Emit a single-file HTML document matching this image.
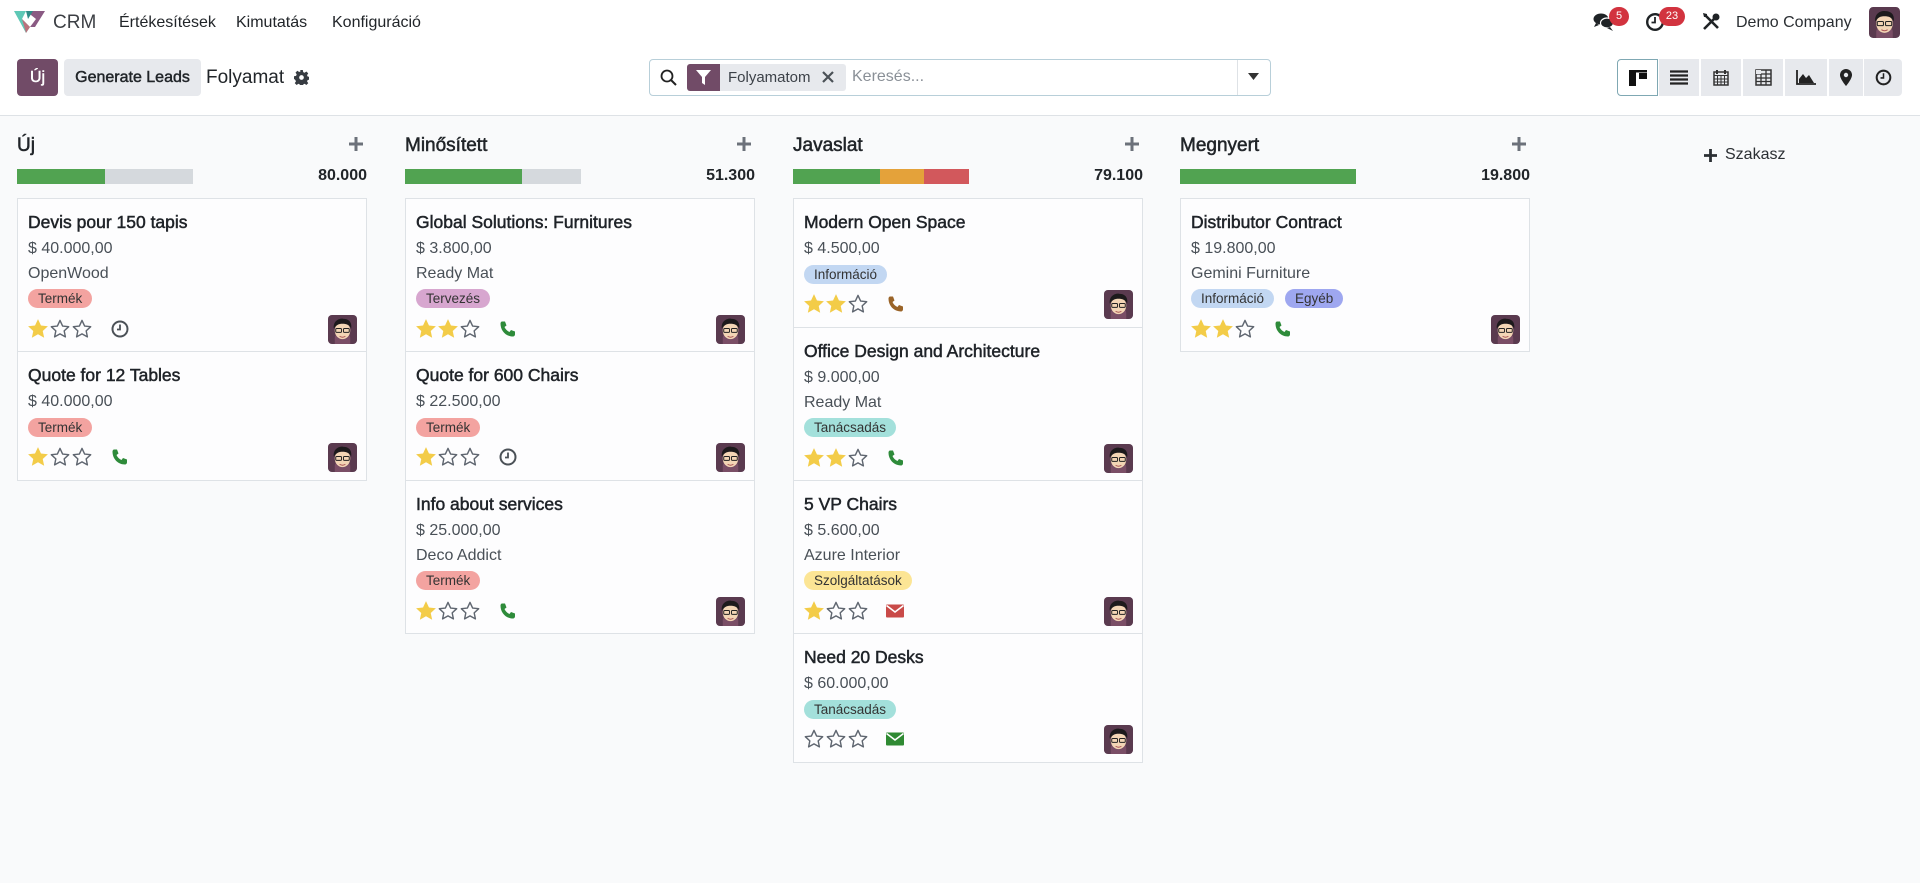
<!DOCTYPE html>
<html><head><meta charset="utf-8">
<style>
*{box-sizing:border-box;margin:0;padding:0}
body{width:1920px;height:883px;overflow:hidden;background:#f9fafb;font-family:"Liberation Sans",sans-serif;color:#212529;position:relative}
.a{position:absolute}
.nav{left:0;top:0;width:1920px;height:46px;background:#fff}
.nav span{position:absolute;top:14px;font-size:16px;color:#212529}
.cp{left:0;top:46px;width:1920px;height:70px;background:#fff;border-bottom:1px solid #dee2e6}
.md{font-weight:normal;-webkit-text-stroke:0.45px currentColor}
.btn{position:absolute;top:59px;height:37px;border-radius:4px;font-size:16px;display:flex;align-items:center;justify-content:center;font-weight:normal;-webkit-text-stroke:0.45px currentColor}
.vs{position:absolute;top:59px;height:37px;background:#e7e9ed;display:flex;align-items:center;justify-content:center}
.col{position:absolute;top:130px;width:350px}
.ct{position:absolute;left:0;top:5px;font-size:19px;color:#212529;-webkit-text-stroke:0.5px #212529}
.cplus{position:absolute;right:4px;top:7px;width:14px;height:14px}
.bar{position:absolute;left:0;top:39px;width:176px;height:15px;background:#d5d9dd;display:flex}
.tot{position:absolute;right:0;top:37px;font-size:16px;font-weight:bold}
.card{position:absolute;left:0;width:350px;background:#fdfdfe;border:1px solid #dee2e6}
.card .t{position:absolute;left:10px;top:13px;font-size:17.5px;color:#1f2328;white-space:nowrap;-webkit-text-stroke:0.5px #1f2328}
.card .p{position:absolute;left:10px;font-size:16px;color:#495057}
.tag{position:absolute;height:19px;border-radius:10px;font-size:13.5px;line-height:19px;padding:0 10px;color:#333}
.stars{position:absolute;left:9px;width:70px;height:22px}
.act{position:absolute;left:92px;width:20px;height:20px}
.av{position:absolute;right:9px;width:29px;height:29px}
</style></head><body>
<svg width="0" height="0" style="position:absolute">
<defs>
<symbol id="sf" viewBox="0 0 20 20"><path d="M10 1l2.7 5.8 6.3.7-4.7 4.3 1.3 6.2-5.6-3.2-5.6 3.2 1.3-6.2L1 7.5l6.3-.7z" fill="#f3cc48"/></symbol>
<symbol id="se" viewBox="0 0 20 20"><path d="M10 2.2l2.4 5.1 5.5.6-4.1 3.8 1.1 5.5-4.9-2.8-4.9 2.8 1.1-5.5-4.1-3.8 5.5-.6z" fill="none" stroke="#5f6670" stroke-width="1.3" stroke-linejoin="round"/></symbol>
<symbol id="av" viewBox="0 0 30 30"><rect width="30" height="30" rx="4" fill="#5a3a4f"/><path d="M7 30v-6c0-8 16-8 16 0v6z" fill="#7a4e66"/><ellipse cx="15" cy="16" rx="8" ry="9" fill="#f3d5b5"/><path d="M6 14c-1-8 6-11 10-10 5 0 9 3 8 10-2-4-5-5-9-5s-6 1-9 5z" fill="#1d1a1c"/><rect x="8" y="14" width="6" height="4" rx="1" fill="none" stroke="#222" stroke-width="1"/><rect x="16" y="14" width="6" height="4" rx="1" fill="none" stroke="#222" stroke-width="1"/><path d="M12 22q3 2 6 0" stroke="#a55" fill="none" stroke-width="1"/></symbol>
<symbol id="ph" viewBox="0 0 20 20"><path d="M4 2.5l3 0 1.5 4-2 1.5c1 2.3 2.7 4 5 5l1.5-2 4 1.5v3c0 1-1 2-2 2C8 17.5 2.5 12 2.5 4.5c0-1 .8-2 1.5-2z"/></symbol>
<symbol id="ck" viewBox="0 0 20 20"><circle cx="10" cy="10" r="7.5" fill="none" stroke="#4b5157" stroke-width="2"/><path d="M10 5.5v5h-3" fill="none" stroke="#4b5157" stroke-width="1.8"/></symbol>
<symbol id="em" viewBox="0 0 20 20"><rect x="1" y="3.5" width="18" height="13" rx="1"/><path d="M1.5 4.5l8.5 6.5 8.5-6.5" fill="none" stroke="#fff" stroke-width="1.6"/></symbol>
<symbol id="pl" viewBox="0 0 14 14"><path d="M5.5 0h3v5.5H14v3H8.5V14h-3V8.5H0v-3h5.5z" fill="#6c717a"/></symbol>
</defs></svg>

<div class="a nav">
<svg class="a" style="left:14px;top:11px" width="31" height="22" viewBox="0 0 31 22"><path d="M0 0h12l-4 8 8 8-4 6z" fill="#5ec8b6"/><path d="M12 0h19l-10 16-5 0 6-8z" fill="#8a5a83"/><path d="M8 8l8 8-4 6z" fill="#d15d6f" opacity=".8"/><path d="M12 0h7l-5 8z" fill="#2e8c87"/></svg>
<span style="left:53px;top:12px;font-size:19px;color:#3c3f44">CRM</span>
<span style="left:119px">Értékesítések</span>
<span style="left:236px">Kimutatás</span>
<span style="left:332px">Konfiguráció</span>
<svg class="a" style="left:1593px;top:12px" width="22" height="20" viewBox="0 0 22 20"><ellipse cx="8" cy="7" rx="7.5" ry="5.5" fill="#1f2326"/><path d="M3 11l-2 4 5-2z" fill="#1f2326"/><ellipse cx="14" cy="11" rx="6.5" ry="5" fill="#1f2326" stroke="#fff" stroke-width="1.2"/><path d="M17 15l3 4-6-3z" fill="#1f2326"/></svg>
<div class="a" style="left:1609px;top:7px;width:20px;height:19px;border-radius:10px;background:#d2333f;color:#fff;font-size:11px;text-align:center;line-height:19px">5</div>
<svg class="a" style="left:1645px;top:12px" width="20" height="20" viewBox="0 0 20 20"><circle cx="10" cy="10" r="7.8" fill="none" stroke="#1f2326" stroke-width="2.4"/><path d="M10 5v5.5H6.5" fill="none" stroke="#1f2326" stroke-width="1.8"/></svg>
<div class="a" style="left:1659px;top:7px;width:26px;height:19px;border-radius:10px;background:#d2333f;color:#fff;font-size:11px;text-align:center;line-height:19px">23</div>
<svg class="a" style="left:1702px;top:12px" width="19" height="19" viewBox="0 0 19 19"><path d="M2 17L12 7M3 3l13 13" stroke="#1f2326" stroke-width="2.6"/><circle cx="14" cy="5" r="3.5" fill="#1f2326"/><path d="M1 1l4 1 0 3-3 0z" fill="#1f2326"/></svg>
<span style="left:1736px;color:#2b2f33">Demo Company</span>
<svg class="a" style="left:1869px;top:7px" width="31" height="31"><use href="#av"/></svg>
</div>

<div class="a cp"></div>
<div class="btn" style="left:17px;width:41px;background:#714b67;color:#fff">Új</div>
<div class="btn" style="left:64px;width:137px;background:#e7e9ed;color:#212529">Generate Leads</div>
<div class="a" style="left:206px;top:67px;font-size:19px;color:#212529">Folyamat</div>
<svg class="a" style="left:294px;top:70px" width="15" height="15" viewBox="0 0 16 16"><path d="M6.6 0h2.8l.4 2.2 1.5.7 1.9-1.3 2 2-1.3 1.9.7 1.5 2.2.4v2.8l-2.2.4-.7 1.5 1.3 1.9-2 2-1.9-1.3-1.5.7-.4 2.2H6.6l-.4-2.2-1.5-.7-1.9 1.3-2-2 1.3-1.9-.7-1.5L0 9.4V6.6l2.2-.4.7-1.5-1.3-1.9 2-2 1.9 1.3 1.5-.7z" fill="#373c42"/><circle cx="8" cy="8" r="2.5" fill="#fff"/></svg>

<div class="a" style="left:649px;top:59px;width:622px;height:37px;border:1px solid #b8cfd9;border-radius:4px;background:#fff"></div>
<svg class="a" style="left:660px;top:69px" width="17" height="17" viewBox="0 0 17 17"><circle cx="7" cy="7" r="5.5" fill="none" stroke="#222" stroke-width="1.8"/><path d="M11 11l5 5" stroke="#222" stroke-width="2"/></svg>
<div class="a" style="left:687px;top:64px;width:33px;height:27px;background:#714b67;border-radius:3px 0 0 3px"></div>
<svg class="a" style="left:696px;top:70px" width="15" height="15" viewBox="0 0 15 15"><path d="M0 0h15L9 7v8l-3-2V7z" fill="#fff"/></svg>
<div class="a" style="left:720px;top:64px;width:126px;height:27px;background:#e7e9ed;border-radius:0 3px 3px 0;font-size:15px;line-height:27px;padding-left:8px;color:#3c4148">Folyamatom</div>
<svg class="a" style="left:822px;top:71px" width="12" height="12" viewBox="0 0 12 12"><path d="M1 1l10 10M11 1L1 11" stroke="#4b5157" stroke-width="2.2"/></svg>
<div class="a" style="left:852px;top:68px;font-size:16px;color:#8a9097">Keresés...</div>
<div class="a" style="left:1237px;top:60px;width:1px;height:35px;background:#dee2e6"></div>
<svg class="a" style="left:1248px;top:73px" width="11" height="7"><path d="M0 0h11L5.5 7z" fill="#333"/></svg>

<div class="vs" style="left:1617px;width:41px;background:#fff;border:1px solid #7fa8b3;border-radius:4px 0 0 4px"><svg width="18" height="16"><rect x="0" y="0" width="7" height="16" fill="#111"/><rect x="7" y="0" width="11" height="2.5" fill="#111"/><rect x="10" y="3" width="8" height="6" fill="#111"/></svg></div>
<div class="vs" style="left:1659px;width:40px"><svg width="18" height="15"><path d="M0 1.5h18M0 5.5h18M0 9.5h18M0 13.5h18" stroke="#222" stroke-width="2.3"/></svg></div>
<div class="vs" style="left:1701px;width:40px"><svg width="16" height="17" viewBox="0 0 16 17"><rect x="1" y="3" width="14" height="13" fill="none" stroke="#333" stroke-width="1.5"/><path d="M1 6.5h14M4.5 6.5v9.5M8 6.5v9.5M11.5 6.5v9.5M1 10h14M1 13h14" stroke="#333" stroke-width="1"/><path d="M4 1v4M12 1v4" stroke="#333" stroke-width="2"/></svg></div>
<div class="vs" style="left:1743px;width:40px"><svg width="17" height="17" viewBox="0 0 17 17"><rect x="1" y="1" width="15" height="15" fill="none" stroke="#333" stroke-width="1.5"/><path d="M1 5h15M1 9h15M1 12.5h15M6 5v11M11 1v15" stroke="#333" stroke-width="1.3"/><rect x="1" y="1" width="5" height="4" fill="#e7e9ed"/></svg></div>
<div class="vs" style="left:1785px;width:42px"><svg width="20" height="15" viewBox="0 0 20 15"><path d="M1 0v14h19" stroke="#222" stroke-width="1.8" fill="none"/><path d="M3 13V9l4-5 3 4 3-3 5 8z" fill="#222"/></svg></div>
<div class="vs" style="left:1829px;width:34px"><svg width="12" height="17" viewBox="0 0 12 17"><path d="M6 0a6 6 0 0 1 6 6c0 4-6 11-6 11S0 10 0 6a6 6 0 0 1 6-6z" fill="#222"/><circle cx="6" cy="6" r="2.2" fill="#e7e9ed"/></svg></div>
<div class="vs" style="left:1864px;width:38px;border-radius:0 4px 4px 0"><svg width="17" height="17" viewBox="0 0 20 20"><circle cx="10" cy="10" r="8" fill="none" stroke="#222" stroke-width="2.4"/><path d="M10 5v5.5H6.5" fill="none" stroke="#222" stroke-width="1.8"/></svg></div>

<!-- Column 1 -->
<div class="col" style="left:17px">
<div class="ct">Új</div><svg class="cplus" viewBox="0 0 14 14"><use href="#pl"/></svg>
<div class="bar"><div style="width:88px;background:#51a351"></div></div>
<div class="tot">80.000</div>
</div>
<div class="card" style="left:17px;top:198px;height:154px">
<div class="t">Devis pour 150 tapis</div><div class="p" style="top:41px">$ 40.000,00</div><div class="p" style="top:66px">OpenWood</div>
<div class="tag" style="left:10px;top:90px;background:#f3a3a0">Termék</div>
<svg class="stars" style="top:119px"><use href="#sf" x="0" width="22" height="22"/><use href="#se" x="22" width="22" height="22"/><use href="#se" x="44" width="22" height="22"/></svg>
<svg class="act" style="top:120px"><use href="#ck"/></svg>
<svg class="av" style="top:116px"><use href="#av"/></svg>
</div>
<div class="card" style="left:17px;top:351px;height:130px">
<div class="t">Quote for 12 Tables</div><div class="p" style="top:41px">$ 40.000,00</div>
<div class="tag" style="left:10px;top:66px;background:#f3a3a0">Termék</div>
<svg class="stars" style="top:94px"><use href="#sf" x="0" width="22" height="22"/><use href="#se" x="22" width="22" height="22"/><use href="#se" x="44" width="22" height="22"/></svg>
<svg class="act" style="top:95px;fill:#2e8b3a"><use href="#ph"/></svg>
<svg class="av" style="top:91px"><use href="#av"/></svg>
</div>

<!-- Column 2 -->
<div class="col" style="left:405px">
<div class="ct">Minősített</div><svg class="cplus" viewBox="0 0 14 14"><use href="#pl"/></svg>
<div class="bar"><div style="width:117px;background:#51a351"></div></div>
<div class="tot">51.300</div>
</div>
<div class="card" style="left:405px;top:198px;height:154px">
<div class="t">Global Solutions: Furnitures</div><div class="p" style="top:41px">$ 3.800,00</div><div class="p" style="top:66px">Ready Mat</div>
<div class="tag" style="left:10px;top:90px;background:#d7a6cf">Tervezés</div>
<svg class="stars" style="top:119px"><use href="#sf" x="0" width="22" height="22"/><use href="#sf" x="22" width="22" height="22"/><use href="#se" x="44" width="22" height="22"/></svg>
<svg class="act" style="top:120px;fill:#2e8b3a"><use href="#ph"/></svg>
<svg class="av" style="top:116px"><use href="#av"/></svg>
</div>
<div class="card" style="left:405px;top:351px;height:130px">
<div class="t">Quote for 600 Chairs</div><div class="p" style="top:41px">$ 22.500,00</div>
<div class="tag" style="left:10px;top:66px;background:#f3a3a0">Termék</div>
<svg class="stars" style="top:94px"><use href="#sf" x="0" width="22" height="22"/><use href="#se" x="22" width="22" height="22"/><use href="#se" x="44" width="22" height="22"/></svg>
<svg class="act" style="top:95px"><use href="#ck"/></svg>
<svg class="av" style="top:91px"><use href="#av"/></svg>
</div>
<div class="card" style="left:405px;top:480px;height:154px">
<div class="t">Info about services</div><div class="p" style="top:41px">$ 25.000,00</div><div class="p" style="top:66px">Deco Addict</div>
<div class="tag" style="left:10px;top:90px;background:#f3a3a0">Termék</div>
<svg class="stars" style="top:119px"><use href="#sf" x="0" width="22" height="22"/><use href="#se" x="22" width="22" height="22"/><use href="#se" x="44" width="22" height="22"/></svg>
<svg class="act" style="top:120px;fill:#2e8b3a"><use href="#ph"/></svg>
<svg class="av" style="top:116px"><use href="#av"/></svg>
</div>

<!-- Column 3 -->
<div class="col" style="left:793px">
<div class="ct">Javaslat</div><svg class="cplus" viewBox="0 0 14 14"><use href="#pl"/></svg>
<div class="bar"><div style="width:87px;background:#51a351"></div><div style="width:44px;background:#e4a23a"></div><div style="width:45px;background:#d2585c"></div></div>
<div class="tot">79.100</div>
</div>
<div class="card" style="left:793px;top:198px;height:130px">
<div class="t">Modern Open Space</div><div class="p" style="top:41px">$ 4.500,00</div>
<div class="tag" style="left:10px;top:66px;background:#c2d7f2">Információ</div>
<svg class="stars" style="top:94px"><use href="#sf" x="0" width="22" height="22"/><use href="#sf" x="22" width="22" height="22"/><use href="#se" x="44" width="22" height="22"/></svg>
<svg class="act" style="top:95px;fill:#9a6428"><use href="#ph"/></svg>
<svg class="av" style="top:91px"><use href="#av"/></svg>
</div>
<div class="card" style="left:793px;top:327px;height:154px">
<div class="t">Office Design and Architecture</div><div class="p" style="top:41px">$ 9.000,00</div><div class="p" style="top:66px">Ready Mat</div>
<div class="tag" style="left:10px;top:90px;background:#a3e0db">Tanácsadás</div>
<svg class="stars" style="top:119px"><use href="#sf" x="0" width="22" height="22"/><use href="#sf" x="22" width="22" height="22"/><use href="#se" x="44" width="22" height="22"/></svg>
<svg class="act" style="top:120px;fill:#2e8b3a"><use href="#ph"/></svg>
<svg class="av" style="top:116px"><use href="#av"/></svg>
</div>
<div class="card" style="left:793px;top:480px;height:154px">
<div class="t">5 VP Chairs</div><div class="p" style="top:41px">$ 5.600,00</div><div class="p" style="top:66px">Azure Interior</div>
<div class="tag" style="left:10px;top:90px;background:#fce595">Szolgáltatások</div>
<svg class="stars" style="top:119px"><use href="#sf" x="0" width="22" height="22"/><use href="#se" x="22" width="22" height="22"/><use href="#se" x="44" width="22" height="22"/></svg>
<svg class="act" style="top:120px;left:90px;width:22px;fill:#c94a48"><use href="#em"/></svg>
<svg class="av" style="top:116px"><use href="#av"/></svg>
</div>
<div class="card" style="left:793px;top:633px;height:130px">
<div class="t">Need 20 Desks</div><div class="p" style="top:41px">$ 60.000,00</div>
<div class="tag" style="left:10px;top:66px;background:#a3e0db">Tanácsadás</div>
<svg class="stars" style="top:94px"><use href="#se" x="0" width="22" height="22"/><use href="#se" x="22" width="22" height="22"/><use href="#se" x="44" width="22" height="22"/></svg>
<svg class="act" style="top:95px;left:90px;width:22px;fill:#2f8a33"><use href="#em"/></svg>
<svg class="av" style="top:91px"><use href="#av"/></svg>
</div>

<!-- Column 4 -->
<div class="col" style="left:1180px">
<div class="ct">Megnyert</div><svg class="cplus" viewBox="0 0 14 14"><use href="#pl"/></svg>
<div class="bar"><div style="width:176px;background:#51a351"></div></div>
<div class="tot">19.800</div>
</div>
<div class="card" style="left:1180px;top:198px;height:154px">
<div class="t">Distributor Contract</div><div class="p" style="top:41px">$ 19.800,00</div><div class="p" style="top:66px">Gemini Furniture</div>
<div class="tag" style="left:10px;top:90px;background:#c2d7f2">Információ</div>
<div class="tag" style="left:104px;top:90px;background:#9ea7f0">Egyéb</div>
<svg class="stars" style="top:119px"><use href="#sf" x="0" width="22" height="22"/><use href="#sf" x="22" width="22" height="22"/><use href="#se" x="44" width="22" height="22"/></svg>
<svg class="act" style="top:120px;fill:#2e8b3a"><use href="#ph"/></svg>
<svg class="av" style="top:116px"><use href="#av"/></svg>
</div>

<svg class="a" style="left:1704px;top:149px" width="13" height="13" viewBox="0 0 14 14"><path d="M5.5 0h3v5.5H14v3H8.5V14h-3V8.5H0v-3h5.5z" fill="#2b2f33"/></svg>
<div class="a" style="left:1725px;top:146px;font-size:16px;color:#2b2f33">Szakasz</div>
</body></html>
